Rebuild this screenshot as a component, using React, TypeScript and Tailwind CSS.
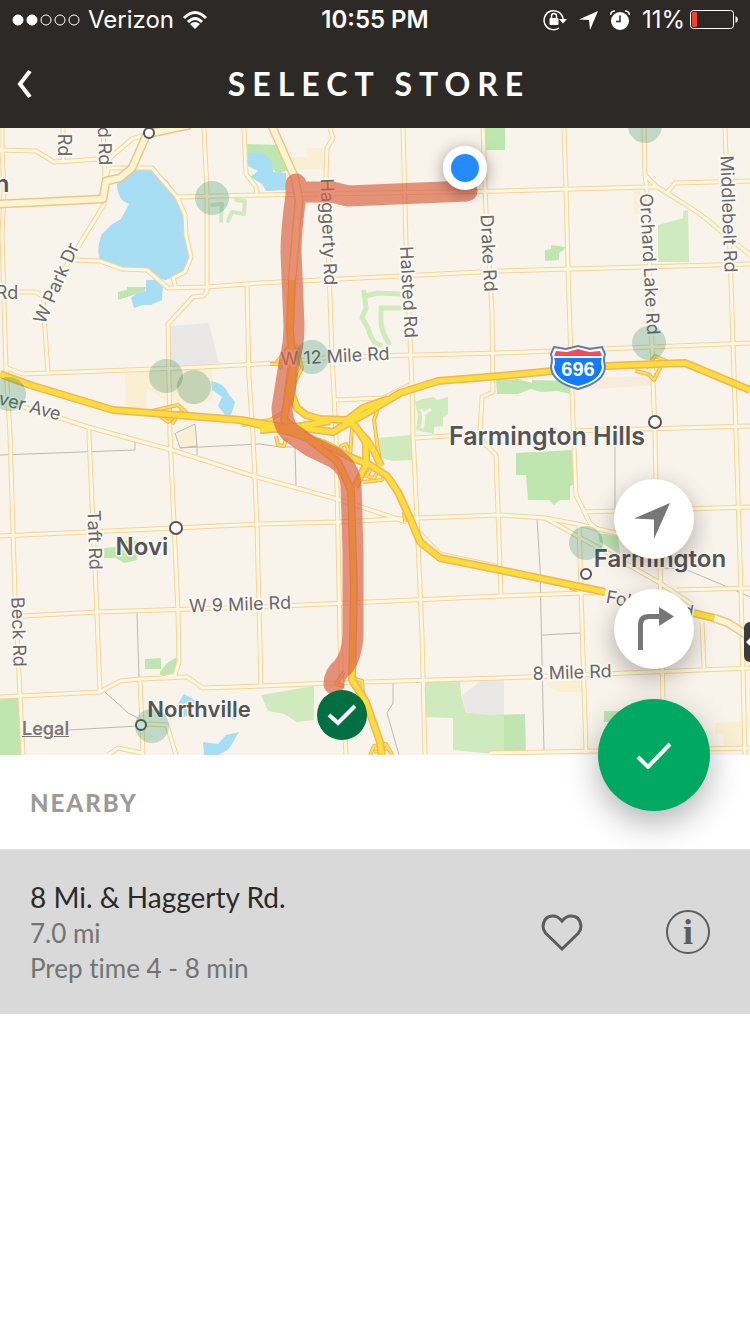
import React from "react";

const localRoads: string[] = [
  "M2 128V150L4 192L2 235L6 368L10 435L15 595L20 695L23 755",
  "M0 150L36 151L54 162L100 159",
  "M63 128V161",
  "M103 128L105 182",
  "M147 134L132 139L110 158L106 180",
  "M107 168H152L177 197L185 215L186 235L191 257L185 272L173 278L176 288",
  "M177 197L260 195L500 191L647 187L657 187",
  "M645 175L657 187L675 198L697 212L709 221L723 233L750 255",
  "M667 193L675 183L750 181",
  "M105 203L75 252L43 302L48 372",
  "M75 260L100 261L122 269L147 270L168 288L207 287L260 283L500 271L750 264",
  "M0 292L36 292L43 297",
  "M204 128L207 192V292L203 296L193 297L168 324L170 435L178 612L179 662L175 675L162 678",
  "M244 128L246 174L256 187L257 195",
  "M247 284L249 378L253 435L257 525L261 687",
  "M7 368L23 374L180 368L280 363L333 357L500 353L750 343",
  "M0 400L60 418L88 427L117 435L172 450L253 476L337 499L407 522",
  "M89 427V435L95 568L97 615L100 692",
  "M0 697L100 692L120 681L140 679L187 677L203 688L260 686L333 683L500 678L750 668",
  "M0 536L260 524L337 522L417 518L500 515L545 518L577 524L620 534",
  "M545 518L597 547L625 563L660 583L693 605",
  "M23 616L97 612L260 607L500 596L582 593L620 592",
  "M677 590L750 588",
  "M140 679L142 725L143 755",
  "M145 724L167 725L176 755",
  "M108 755L118 748L142 753",
  "M330 128L333 138L327 148L326 175L329 268L332 355L336 435L340 640L342 690L346 755",
  "M403 128L406 242L412 385L413 435L417 518L422 635L425 755",
  "M335 400L383 398L412 384",
  "M415 438L480 434",
  "M483 128L486 212L492 312L493 392L482 397L480 430L483 442L496 455L501 595",
  "M564 128L566 188L568 268L572 392L574 448L576 495L590 523L598 530",
  "M644 128L645 175L647 190L652 345L653 380L655 435L656 480L660 562L663 700",
  "M725 128L731 282L736 435L741 590L745 755",
  "M573 431L750 426",
  "M583 512L750 507",
  "M579 525L586 753",
  "M490 753L750 748",
  "M702 622L704 668",
  "M415 528L440 554L500 567",
];

const arterials: string[] = [
  "M0 204L103 199L106 181L120 178L132 168L147 134L190 125",
  "M271 124L295 178L299 200L292 280",
  "M714 618L728 623L750 637",
];

const ramps: string[] = [
  "M282 369L277 362L290 345M270 364H284M296 345L302 368L294 384",
  "M152 411L165 408L178 405L193 418M155 412L168 422L178 412M172 424L182 410",
  "M290 362L286 390L284 412L270 420L242 425",
  "M276 436L278 445L284 446L286 438",
  "M342 450L341 446L346 444L348 450L347 456",
  "M378 408L374 420L377 443L381 466",
  "M352 427L350 457",
  "M372 468L366 476L374 478L378 472M363 482L382 480L386 474",
  "M404 512L405 522",
  "M635 371L648 374L654 380L662 364M646 368L655 356L668 362",
  "M352 678L362 681L363 696M344 672L336 684L344 686M352 684L360 694",
  "M370 755L374 746L386 744L392 755M374 752L388 748",
  "M570 588L577 590",
];

const highways: string[] = [
  "M0 374L30 385L113 410L240 420L290 432L325 444L350 457L370 465L387 476L398 492L410 518L420 542L440 558L500 570L605 592",
  "M350 422L370 411L400 393L438 381L500 376L605 366L685 363L750 390",
  "M292 280L290 330L293 365L288 395L284 420L310 440L338 462L351 490L354 590L352 680L366 702L380 742L382 757",
  "M693 613L714 618",
];

const connectors: string[] = [
  "M293 365L292 395L297 408L306 415L320 419L347 420L363 408L388 399",
  "M260 430L295 427L333 432L350 422L370 411",
  "M240 420L290 428L330 421",
  "M350 422L367 440L375 453L381 466",
  "M355 425L366 443V465L355 487",
];

const boundaries: string[] = [
  "M0 455L135 450V441",
  "M175 433L180 448L197 446L195 424L176 433M180 448L260 444L280 447H295L296 485M197 446V455",
  "M137 612L139 678",
  "M105 692L128 713L138 718",
  "M68 730L137 726",
  "M615 445V515",
  "M537 518L540 568L544 752",
  "M542 635L580 633",
  "M655 567L687 570L730 588L750 597",
  "M393 682V703L387 713L399 755",
];

const stores: [number, number][] = [
  [212, 198], [166, 376], [194, 387], [9, 394], [312, 357],
  [645, 126], [649, 343], [586, 543], [152, 726],
];

type Label = { text: string; x: number; y: number; angle: number };

const roadLabels: Label[] = [
  { text: "Rd", x: 64, y: 145, angle: 90 },
  { text: "d Rd", x: 105, y: 146, angle: 88 },
  { text: "Rd", x: 7, y: 292, angle: 0 },
  { text: "W Park Dr", x: 56, y: 283, angle: -66 },
  { text: "Haggerty Rd", x: 329, y: 232, angle: 88 },
  { text: "Halsted Rd", x: 409, y: 292, angle: 87 },
  { text: "Drake Rd", x: 489, y: 253, angle: 87 },
  { text: "Orchard Lake Rd", x: 650, y: 264, angle: 87 },
  { text: "Middlebelt Rd", x: 729, y: 214, angle: 88 },
  { text: "W 12 Mile Rd", x: 335, y: 356, angle: -3 },
  { text: "ver Ave", x: 30, y: 406, angle: 15 },
  { text: "Taft Rd", x: 95, y: 540, angle: 88 },
  { text: "Beck Rd", x: 19, y: 632, angle: 88 },
  { text: "W 9 Mile Rd", x: 240, y: 604, angle: -2 },
  { text: "8 Mile Rd", x: 572, y: 672, angle: -2 },
  { text: "Folsom Rd", x: 650, y: 604, angle: 10 },
];

type Town = { text: string; x: number; y: number; dot: [number, number]; size: number };

const towns: Town[] = [
  { text: "Farmington Hills", x: 547, y: 436, dot: [655, 422], size: 25 },
  { text: "Novi", x: 142, y: 546, dot: [176, 528], size: 24 },
  { text: "Farmington", x: 660, y: 558, dot: [586, 574], size: 24 },
  { text: "Northville", x: 199, y: 709, dot: [141, 725], size: 22 },
];

function Lines({ paths, stroke, width }: { paths: string[]; stroke: string; width: number }) {
  return (
    <g fill="none" stroke={stroke} strokeWidth={width} strokeLinejoin="round">
      {paths.map((d) => (
        <path key={d} d={d} />
      ))}
    </g>
  );
}

function StoreMap() {
  return (
    <svg viewBox="0 128 750 627" className="block h-auto w-full" role="img" aria-label="Route to store">
      <defs>
        <filter id="pinShadow" x="-80%" y="-80%" width="260%" height="260%">
          <feDropShadow dx="0" dy="3" stdDeviation="8" floodColor="#000" floodOpacity="0.4" />
        </filter>
      </defs>
      <rect y="128" width="750" height="627" fill="#f8f4ec" />

      <g fill="#faefd2">
        <path d="M125 371L212 368L213 400L194 405L165 400L147 388L146 409L126 408Z" />
        <path d="M307 148H323V169L292 170V157H307Z" />
        <path d="M633 189L640 190L648 214H634Z" />
        <path d="M546 682L582 680V692L560 692Q547 688 546 682Z" />
        <path d="M715 723L742 721L744 747H724L722 734H715Z" />
        <path d="M175 433L195 424L197 446L181 448Z" />
      </g>
      <path d="M573 378L652 376L651 386L573 390Z" fill="#f6ecdb" />
      <g fill="#e9e8e6">
        <path d="M170 326L209 323L219 363L171 366Z" />
        <path d="M462 696L480 681L504 678V715H467Z" />
      </g>

      <g fill="#c0e6b0">
        <path d="M246 144L284 145L288 170L278 174L262 160L247 158Z" />
        <path d="M484 128H505V150H485Z" />
        <path d="M545 250L551 249V245L565 247L564 250L559 253V260L545 261Z" />
        <path d="M118 292L127 290V287L146 287L145 291L118 300Z" />
        <path d="M496 380L518 379L532 383V380L570 381V394L558 391L541 392L531 389L518 394L497 394Z" />
        <path d="M516 453L573 450V485L570 486V500H560L554 505L549 500H528L526 475H516Z" />
        <path d="M104 548L116 547V540L136 541L137 560L124 563L116 558H104Z" />
        <path d="M145 659L161 658V669H145Z" />
        <path d="M160 672L167 663L177 657L176 668L172 675H160Z" />
        <path d="M0 698H19L22 755H0Z" />
        <path d="M490 715L525 714L526 753H495Z" />
        <path d="M598 533L618 536L620 555L610 548L600 542Z" />
        <path d="M604 711H625V722H604Z" />
      </g>
      <g fill="#cfeabc">
        <path d="M658 225L673 221L683 218V211L688 210L689 262H658Z" />
        <path d="M415 402L423 399L434 397L437 400L448 397V414L443 417V426L434 427V434L424 432L416 430L418 415Z" />
        <path d="M377 438L413 435V460L392 461L379 457Z" />
        <path d="M261 695L314 686V720L297 722L284 714L268 711Z" />
        <path d="M425 681L460 679L461 695L466 713L504 716V755L453 750V718L426 717Z" />
      </g>
      <path d="M421 409Q426 416 422 428M422 415L431 409" fill="none" stroke="#f8f4ec" strokeWidth="3" />
      <g fill="none" stroke="#cfeabc" strokeLinecap="round" strokeLinejoin="round">
        <path d="M364 292L366 308L362 318L368 328Q372 344 380 345M366 296L378 293L400 294M382 308H401M381 308V322Q382 334 389 343" strokeWidth="5" />
        <path d="M212 205L222 204L221 221M228 221L232 212L244 214L245 201L236 200" strokeWidth="4" />
      </g>

      <g fill="#a8def4">
        <path d="M117 184Q120 174 132 169Q143 165 154 170L168 181L177 197L184 214L186 236L190 257L184 272L166 280L156 278L144 269L124 270L100 260Q96 248 102 234L111 225L121 219L129 204Q117 200 117 184Z" />
        <path d="M146 280H158L163 287L162 300L151 305H142L134 308L131 298L137 293L146 291Z" />
        <path d="M247 153L262 152L272 161L273 172L286 173L286 190L266 191L262 184L250 177L258 171L248 166Z" />
        <path d="M211 381Q224 383 228 393L235 402L231 415H225L218 406L222 397L212 390Z" />
        <path d="M174 710L184 694L195 700L192 714L179 719Z" />
        <path d="M228 706L240 714L235 720L225 715Z" />
        <path d="M203 742L218 744L226 735L239 732L229 749L219 755H204Z" />
      </g>

      <Lines paths={boundaries} stroke="#bdbab5" width={1} />
      <Lines paths={localRoads} stroke="#f4d39b" width={5} />
      <Lines paths={localRoads} stroke="#fdf8df" width={3} />
      <Lines paths={arterials} stroke="#f0c58b" width={9} />
      <Lines paths={arterials} stroke="#fdf5d0" width={6} />
      <Lines paths={ramps} stroke="#efb454" width={4} />
      <Lines paths={ramps} stroke="#fde05c" width={2} />
      <Lines paths={[...connectors, ...highways]} stroke="#efb45c" width={8} />
      <Lines paths={[...connectors, ...highways]} stroke="#fddd3a" width={5} />

      <g
        fontFamily="Inter, 'Liberation Sans', sans-serif"
        fill="#69686a"
        stroke="#fbf8f2"
        strokeWidth="4"
        paintOrder="stroke"
        strokeLinejoin="round"
        textAnchor="middle"
        dominantBaseline="central"
        fontSize="18"
      >
        {roadLabels.map((l) => (
          <text key={l.text + l.x} transform={`translate(${l.x} ${l.y}) rotate(${l.angle})`}>
            {l.text}
          </text>
        ))}
      </g>

      <g>
        <path d="M554 347L566 349L578 346L590 349L602 347L605 354Q603 360 605 366Q605 382 578 389Q551 382 551 366Q553 360 551 354Z" fill="#fff" stroke="#5c7eb0" strokeWidth="2" />
        <path d="M556 351L567 352L578 349L589 352L600 351L602 356H554Z" fill="#f04c5a" />
        <path d="M554 358H602Q600 362 602 367Q600 381 578 386Q556 381 554 367Q556 362 554 358Z" fill="#147bff" />
        <text x="578" y="376" textAnchor="middle" fontFamily="'Liberation Sans', sans-serif" fontWeight="700" fontSize="20" fill="#fff">696</text>
      </g>
      <rect x="744" y="622" width="30" height="40" rx="6" fill="#3b3b3b" />
      <path d="M746 642L754 634V650Z" fill="#fff" />

      <g
        fontFamily="Inter, 'Liberation Sans', sans-serif"
        fontWeight="600"
        fill="#555456"
        stroke="#fbf8f2"
        strokeWidth="3"
        paintOrder="stroke"
        strokeLinejoin="round"
        textAnchor="middle"
        dominantBaseline="central"
      >
        {towns.map((t) => (
          <text key={t.text} x={t.x} y={t.y} fontSize={t.size}>
            {t.text}
          </text>
        ))}
        <text x="2" y="183" fontSize="24">n</text>
      </g>
      <g fill="#fff" stroke="#555456" strokeWidth="2">
        {towns.map((t) => (
          <circle key={t.text} cx={t.dot[0]} cy={t.dot[1]} r={t.dot[1] > 560 ? 5 : 6} />
        ))}
        <circle cx="149" cy="133" r="5" />
      </g>

      <path
        d="M467 191L348 196L332 192L297 192L296 184L296 195Q291 230 291 252L294 325Q294 345 290 358L282 408Q282 423 290 432L310 446L335 458Q350 468 351 485L353 552V635Q352 656 343 667Q334 674 334 684"
        fill="none"
        stroke="#d95f42"
        strokeOpacity="0.67"
        strokeWidth="21"
        strokeLinecap="round"
        strokeLinejoin="round"
      />

      <g fill="#00704a" fillOpacity="0.22">
        {stores.map(([cx, cy]) => (
          <circle key={cx} cx={cx} cy={cy} r="17" />
        ))}
      </g>

      <circle cx="465" cy="168" r="22" fill="#fff" filter="url(#pinShadow)" />
      <circle cx="465" cy="168" r="14" fill="#248aff" />
      <circle cx="342" cy="715" r="25" fill="#006f41" />
      <path d="M329 715L338 723L355 706" fill="none" stroke="#fff" strokeWidth="4" />
    </svg>
  );
}

function StatusBar() {
  return (
    <div className="grid h-10 grid-cols-[1fr_auto_1fr] items-center px-3 font-['Inter',sans-serif] text-2xl leading-none">
      <div className="flex items-center gap-2">
        <svg width="68" height="12" viewBox="0 0 68 12" aria-hidden="true">
          <g fill="#fff" stroke="#fff">
            <circle cx="6" cy="6" r="5" />
            <circle cx="20" cy="6" r="5" />
            <g fill="none">
              <circle cx="34" cy="6" r="5" />
              <circle cx="48" cy="6" r="5" />
              <circle cx="62" cy="6" r="5" />
            </g>
          </g>
        </svg>
        <span>Verizon</span>
        <svg width="26" height="20" viewBox="0 0 26 20" aria-label="Wi-Fi">
          <g fill="none" stroke="#fff" strokeWidth="3">
            <path d="M2 8Q13 -3 24 8" />
            <path d="M6 12Q13 5 20 12" />
          </g>
          <path d="M13 19L8 14Q13 10 18 14Z" fill="#fff" />
        </svg>
      </div>
      <span className="font-semibold">10:55 PM</span>
      <div className="flex items-center justify-end">
        <svg className="mr-3" width="24" height="22" viewBox="0 0 24 22" aria-label="Orientation locked">
          <path d="M16 19A9.5 9.5 0 1 1 20 10" fill="none" stroke="#fff" strokeWidth="1.5" />
          <path d="M16 10H24L20 14.5Z" fill="#fff" />
          <rect x="6.5" y="9" width="9" height="7" rx="1" fill="#fff" />
          <path d="M8.5 9.5V7Q8.5 4.5 11 4.5T13.5 7V9.5" fill="none" stroke="#fff" strokeWidth="1.5" />
        </svg>
        <svg className="mr-3" width="19" height="19" viewBox="0 0 19 19" aria-label="Location in use">
          <path d="M0 8.5L19 0L11 19L10 9Z" fill="#fff" />
        </svg>
        <svg className="mr-3" width="20" height="20" viewBox="0 0 20 20" aria-label="Alarm set">
          <circle cx="10" cy="11" r="9" fill="#fff" />
          <path d="M0.5 5Q1 1 5 1M19.5 5Q19 1 15 1" fill="none" stroke="#fff" strokeWidth="1.5" />
          <path d="M10 5.5V11.5H6" fill="none" stroke="#2d2926" strokeWidth="1.5" />
        </svg>
        <span className="mr-1">11%</span>
        <svg width="49" height="20" viewBox="0 0 49 20" aria-label="Battery low">
          <rect x="1.5" y="0.5" width="43" height="18" rx="3" fill="none" stroke="#fff" />
          <rect x="3" y="2" width="5" height="15" rx="1" fill="#fc3d2f" />
          <path d="M46.5 6Q49 7 49 9.5T46.5 13Z" fill="#fff" />
        </svg>
      </div>
    </div>
  );
}

export default function App() {
  return (
    <div className="min-h-screen bg-white font-['Lato','Liberation_Sans',sans-serif]">
      <header className="bg-[#2d2926] text-white">
        <StatusBar />
        <div className="grid h-22 grid-cols-[1fr_auto_1fr] items-center px-4">
          <button type="button" aria-label="Back" className="justify-self-start">
            <svg width="16" height="28" viewBox="0 0 16 28">
              <path d="M14 1L4 14L14 27" fill="none" stroke="#fff" strokeWidth="4" />
            </svg>
          </button>
          <h1 className="pl-2 text-[32px] leading-10 font-bold tracking-[7px]">SELECT STORE</h1>
        </div>
      </header>

      <main>
        <section className="relative">
          <StoreMap />
          <a href="#legal" className="absolute bottom-[14px] left-[22px] font-['Inter',sans-serif] text-lg leading-6 font-semibold text-[#7b7a7b] underline">
            Legal
          </a>
          <div className="absolute right-10 -bottom-14 flex flex-col items-center gap-[30px]">
            <button type="button" aria-label="Center on my location" className="flex size-20 items-center justify-center rounded-full bg-white shadow-[0_8px_24px_rgba(0,0,0,0.3)]">
              <svg width="40" height="40" viewBox="0 0 40 40">
                <path d="M0 19.5L36 4L20 40V20.5Z" fill="#777" />
              </svg>
            </button>
            <button type="button" aria-label="Directions" className="flex size-20 items-center justify-center rounded-full bg-white shadow-[0_8px_24px_rgba(0,0,0,0.3)]">
              <svg width="40" height="44" viewBox="0 0 40 44">
                <path d="M6.5 43V18Q6.5 9.5 15 9.5H27" fill="none" stroke="#777" strokeWidth="5" />
                <path d="M25 0L40 9.5L25 19Z" fill="#777" />
              </svg>
            </button>
            <button type="button" aria-label="Confirm store" className="flex size-28 items-center justify-center rounded-full bg-[#00a862] shadow-[0_12px_32px_rgba(0,0,0,0.3)]">
              <svg width="36" height="28" viewBox="0 0 36 28">
                <path d="M2 16L12 26L34 3" fill="none" stroke="#fff" strokeWidth="4" />
              </svg>
            </button>
          </div>
        </section>

        <section>
          <h2 className="px-[30px] pt-8 pb-[30px] text-2xl leading-8 font-black tracking-[2px] text-[#9b9b9b]">NEARBY</h2>
          <article className="flex items-center border-t border-[#e0e0e0] bg-[#d9d9d9] py-7 pr-10 pl-[30px]">
            <div className="flex-1 text-[26px] leading-[35px] text-[#737373] [font-variant-ligatures:none]">
              <h3 className="text-[28px] leading-[38px] text-[#2a2a2a]">8 Mi. &amp; Haggerty Rd.</h3>
              <p>7.0 mi</p>
              <p>Prep time 4 - 8 min</p>
            </div>
            <button type="button" aria-label="Add to favorites" className="mr-[83px]">
              <svg width="42" height="38" viewBox="0 0 42 38">
                <path d="M21 36L4.5 20Q2 17 2 13Q3 3 12 3Q17 3 21 8Q25 3 30 3Q39 3 40 13Q40 17 37.5 20Z" fill="none" stroke="#5c5c5c" strokeWidth="3" />
              </svg>
            </button>
            <button type="button" aria-label="Store information" className="flex size-11 items-center justify-center rounded-full border-2 border-[#5c5c5c] font-['Liberation_Serif',serif] text-4xl leading-none font-bold text-[#5c5c5c]">
              i
            </button>
          </article>
        </section>
      </main>
    </div>
  );
}
